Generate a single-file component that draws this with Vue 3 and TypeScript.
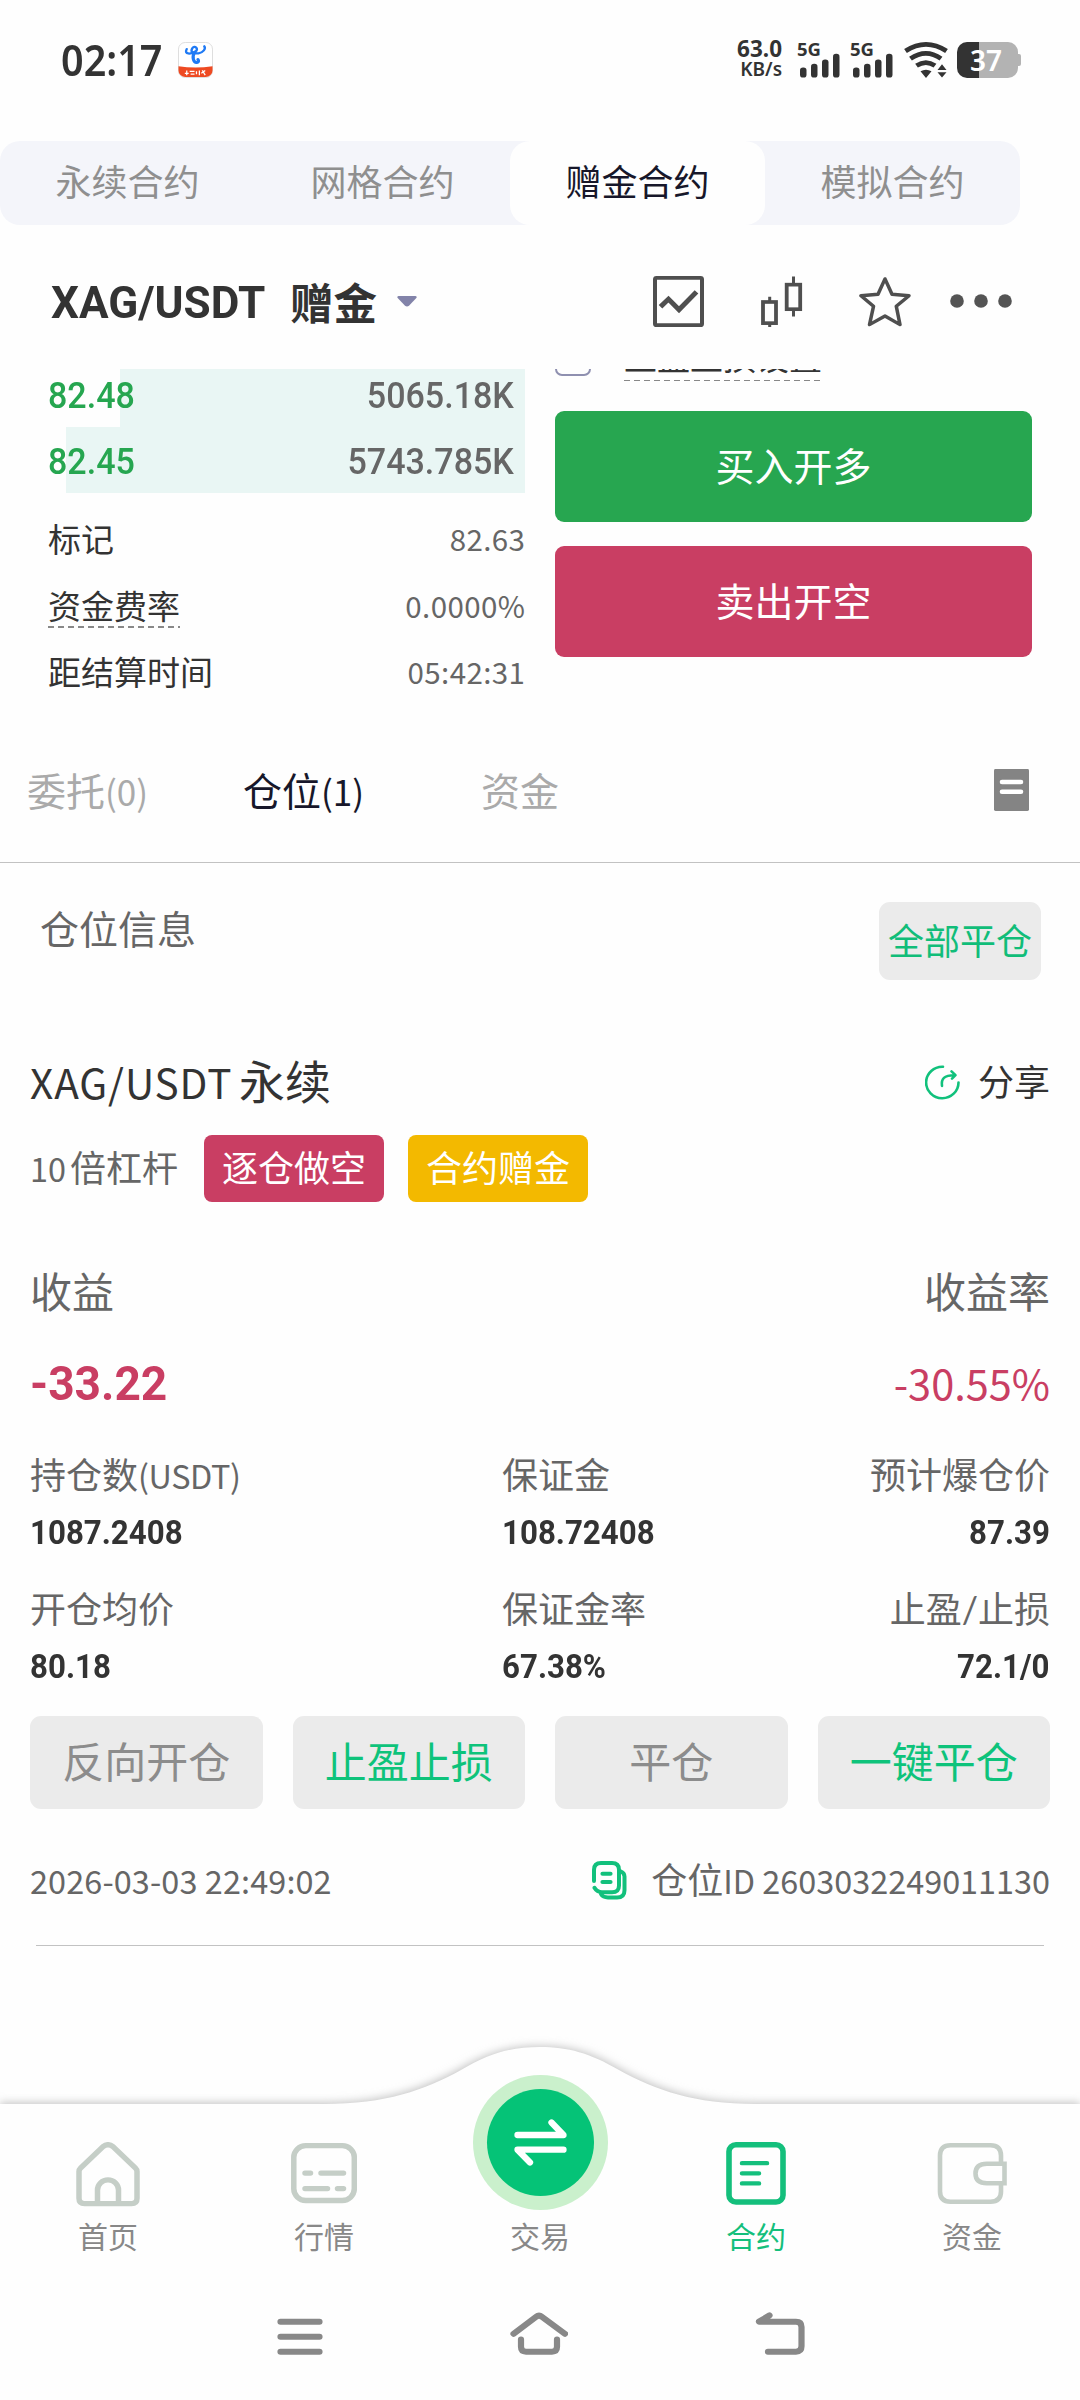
<script setup lang="ts">
import { ref } from 'vue'

interface BookRow { price: string; amount: string; depth: number }
interface Stat { label: string; latin?: string; value: string }
interface Action { text: string; primary: boolean }

const segments = ['永续合约', '网格合约', '赠金合约', '模拟合约']
const activeSegment = ref(2)

const book: BookRow[] = [
  { price: '82.48', amount: '5065.18K', depth: 84.9 },
  { price: '82.45', amount: '5743.785K', depth: 96.2 },
]

const market = [
  { label: '标记', value: '82.63', hint: false },
  { label: '资金费率', value: '0.0000%', hint: true },
  { label: '距结算时间', value: '05:42:31', hint: false },
]

const stats: Stat[] = [
  { label: '持仓数', latin: '(USDT)', value: '1087.2408' },
  { label: '保证金', value: '108.72408' },
  { label: '预计爆仓价', value: '87.39' },
  { label: '开仓均价', value: '80.18' },
  { label: '保证金率', value: '67.38%' },
  { label: '止盈/止损', value: '72.1/0' },
]

const actions: Action[] = [
  { text: '反向开仓', primary: false },
  { text: '止盈止损', primary: true },
  { text: '平仓', primary: false },
  { text: '一键平仓', primary: true },
]
</script>

<template>
  <div class="page">
    <header class="status">
      <div class="status-left">
        <span class="clock">02:17</span>
        <svg class="app-icon" width="35" height="36" viewBox="0 0 36 38" preserveAspectRatio="none">
          <rect x="0.5" y="0.5" width="35" height="37" rx="7" fill="#fff" stroke="#dcdcdc" />
          <path d="M0.5 25.500Q18 28.500 35.500 25.500V30a7 7 0 0 1-7 7H7.500a7 7 0 0 1-7-7Z" fill="#ee4a22" />
          <path d="M9 7.500C6 13.500 13 13 18 10C22 7.500 17 2.500 14.500 7C12.500 11 16 12.500 21 12C26 11 29 7 27 4.500" fill="none" stroke="#1f7af5" stroke-width="2.400" stroke-linecap="round" />
          <path d="M17 11C14 16 16 22.500 20 21.500Q22 20.500 20.500 18.500" fill="none" stroke="#1f7af5" stroke-width="3.200" stroke-linecap="round" />
          <path d="M7 33h4M9 30v5M12 31h5M13 34h4M19 31v3M22 30v5M24 33l4-3M25 30l3 5" stroke="#fff" stroke-width="1.300" />
        </svg>
      </div>
      <div class="status-right">
        <div class="rate"><span>63.0</span><span class="unit">KB/s</span></div>
        <div v-for="n in 2" :key="n" class="signal">
          <span class="net">5G</span>
          <svg width="42" height="36" viewBox="0 0 42 38" preserveAspectRatio="none" fill="#333">
            <rect x="2" y="27" width="6.500" height="10.500" rx="3" />
            <rect x="13" y="23" width="6.500" height="14.500" rx="3" />
            <rect x="24" y="18.500" width="6.500" height="19" rx="3" />
            <rect x="35" y="12.500" width="6.500" height="25" rx="3" />
          </svg>
        </div>
        <svg class="wifi" width="44" height="36" viewBox="0 0 44 38" preserveAspectRatio="none" fill="none" stroke="#333" stroke-width="4.800">
          <path d="M1.500 9.500Q22 -4.500 42.500 9.500" />
          <path d="M6.500 17.500Q22 6.500 37 17.500" />
          <path d="M12.500 25Q22 18.500 31 25" />
          <path d="M16.500 31Q22 27.500 27.500 31L22 38ZM33.500 29.500h9L38 23.500ZM33.500 32h9L38 37.500Z" fill="#333" stroke="none" />
        </svg>
        <div class="battery"><span>37</span></div>
      </div>
    </header>

    <nav class="segments">
      <div v-for="(s, i) in segments" :key="s" class="segment" :class="{ active: i === activeSegment }" @click="activeSegment = i">{{ s }}</div>
    </nav>

    <section class="pair">
      <h1><span class="din pair-code">XAG/USDT</span><span class="pair-kind">赠金</span></h1>
      <svg class="caret" width="20" height="11" viewBox="0 0 20 12" preserveAspectRatio="none"><path d="M1.500 0h17q2 0.500 0.800 2.200L12 10.500q-2 1.800-4 0L0.700 2.200Q-0.500 0.500 1.500 0Z" fill="#8283a9" /></svg>
      <div class="pair-icons">
        <svg width="51" height="51" viewBox="0 0 51 53" preserveAspectRatio="none" fill="none" stroke="#4f4f4f">
          <rect x="2" y="2" width="47" height="49" rx="1.500" stroke-width="4" />
          <path d="M7.500 32L15.500 24L26 35L43.500 16.500" stroke-width="5" />
        </svg>
        <svg class="candles" width="42" height="51" viewBox="0 0 42 53" preserveAspectRatio="none" fill="none" stroke="#4f4f4f">
          <rect x="2" y="27" width="13" height="22" stroke-width="3.800" />
          <rect x="25.700" y="9" width="13.500" height="25.500" stroke-width="3.800" />
          <path d="M8.700 21.500v5M8.700 49v4M32.500 0.500v8M32.500 34.500v7.500" stroke-width="3" />
        </svg>
        <svg class="star" width="52" height="51" viewBox="0 0 52 53" preserveAspectRatio="none" fill="none" stroke="#4f4f4f" stroke-width="3.500" stroke-linejoin="round">
          <path d="M26 3L33 19L50 20.500L37.300 31.500L41 50.500L26 41.500L10.500 50.500L14.500 31.500L2 20.500L19 19Z" />
        </svg>
        <svg class="dots" width="62" height="14" viewBox="0 0 62 14" fill="#545454">
          <circle cx="7" cy="7" r="6.800" /><circle cx="31" cy="7" r="6.800" /><circle cx="55" cy="7" r="6.800" />
        </svg>
      </div>
    </section>

    <section class="trade">
      <div class="trade-left">
        <div v-for="row in book" :key="row.price" class="book-row">
          <i class="depth" :style="{ width: row.depth + '%' }"></i>
          <span class="din price">{{ row.price }}</span>
          <span class="din amount">{{ row.amount }}</span>
        </div>
        <div class="market">
          <div v-for="m in market" :key="m.label" class="market-row">
            <span class="market-label" :class="{ hint: m.hint }">{{ m.label }}</span>
            <span class="market-value">{{ m.value }}</span>
          </div>
        </div>
      </div>
      <div class="trade-right">
        <div class="tpsl"><i class="check"></i><span>止盈止损设置</span></div>
        <button class="order buy">买入开多</button>
        <button class="order sell">卖出开空</button>
      </div>
    </section>

    <nav class="tabs">
      <span class="tab">委托<span class="lat">(0)</span></span>
      <span class="tab on">仓位<span class="lat">(1)</span></span>
      <span class="tab">资金</span>
      <svg width="35" height="42" viewBox="0 0 35 43.500" preserveAspectRatio="none"><rect width="35" height="43.500" rx="1.500" fill="#848484" /><path d="M8 13.500h19M8 23.500h19" stroke="#fff" stroke-width="4.600" stroke-linecap="round" /></svg>
    </nav>

    <section class="info-head">
      <span>仓位信息</span>
      <button class="close-all">全部平仓</button>
    </section>

    <article class="position">
      <div class="symbol-row">
        <div class="symbol"><span class="lat code">XAG/USDT</span>永续</div>
        <div class="share">
          <svg width="35" height="35" viewBox="0 0 35 36" preserveAspectRatio="none" fill="none" stroke="#11c17c" stroke-width="2.600" stroke-linecap="round" stroke-linejoin="round">
            <path d="M18 1.800A16.200 16.200 0 1 0 33.500 18" />
            <path d="M17 21.500C16 14 19 10.500 29.500 10.500M26.500 6.500L30.500 10.500L27 14" />
          </svg>
          <span>分享</span>
        </div>
      </div>
      <div class="badges">
        <span class="lever"><span class="lat">10</span>倍杠杆</span>
        <span class="badge short">逐仓做空</span>
        <span class="badge bonus">合约赠金</span>
      </div>
      <div class="profit-labels"><span>收益</span><span>收益率</span></div>
      <div class="profit-values"><span class="din profit">-33.22</span><span class="percent">-30.55%</span></div>
      <div class="stats">
        <div v-for="s in stats" :key="s.label" class="stat">
          <div class="stat-label">{{ s.label }}<span v-if="s.latin" class="lat">{{ s.latin }}</span></div>
          <div class="stat-value"><span class="din">{{ s.value }}</span></div>
        </div>
      </div>
      <div class="actions">
        <button v-for="a in actions" :key="a.text" :class="{ primary: a.primary }">{{ a.text }}</button>
      </div>
      <div class="meta">
        <span><span class="lat date">2026-03-03 22:49:02</span></span>
        <div class="pid">
          <svg width="35" height="39" viewBox="0 0 35 40" preserveAspectRatio="none" fill="none" stroke="#12c07c" stroke-width="4" stroke-linecap="round" stroke-linejoin="round">
            <path d="M2 20.500V9Q2 2 9 2H20Q27 2 27 9V25Q27 32 20 32H10Q5 32 2.500 27.500" />
            <path d="M28.500 10.500Q32.500 12 32.500 16V30Q32.500 37.500 25 37.500H16Q11 37.500 9 34" />
            <path d="M10.500 13h8M10.500 21.500h8" stroke-width="4.200" />
          </svg>
          <span>仓位<span class="lat">ID 2603032249011130</span></span>
        </div>
      </div>
      <hr />
    </article>

    <footer>
      <svg class="hill" width="1080" height="110" viewBox="0 2010 1080 110">
        <defs><filter id="soft" x="-5%" y="-30%" width="110%" height="160%"><feGaussianBlur stdDeviation="4.500" /></filter></defs>
        <path d="M0 2102.500H325C385 2102.500 425 2088 461 2068C490 2051 512 2046 540 2046C568 2046 590 2051 619 2068C655 2088 695 2102.500 755 2102.500H1080V2120H0Z" fill="#c4c4c4" filter="url(#soft)" />
        <path d="M0 2104H325C385 2104 425 2090 461 2070C490 2053 512 2047 540 2047C568 2047 590 2053 619 2070C655 2090 695 2104 755 2104H1080V2130H0Z" fill="#fefefe" />
      </svg>
      <div class="tabbar">
        <div class="item">
          <svg width="64" height="65" viewBox="0 0 64 67" preserveAspectRatio="none" fill="none" stroke="#c5cec7" stroke-width="5.500" stroke-linejoin="round">
            <path d="M3 30.500Q3 28.500 4.500 27L27 4.800Q32 0.800 37 4.800L59.500 27Q61 28.500 61 30.500V58Q61 63.500 55.500 63.500H8.500Q3 63.500 3 58Z" />
            <path d="M21.500 63V49.500a10.500 10.500 0 0 1 21 0V63" />
          </svg>
          <span>首页</span>
        </div>
        <div class="item">
          <svg width="66" height="65" viewBox="0 0 66 67" preserveAspectRatio="none" fill="none" stroke="#c5cec7" stroke-width="5.500" stroke-linecap="round">
            <rect x="2.800" y="3.800" width="60.500" height="56.500" rx="12" />
            <path d="M14 32h5.500M30 32h22.500M14 48h22.500M46.500 48h6" />
          </svg>
          <span>行情</span>
        </div>
        <div class="item">
          <div class="trade-btn">
            <svg width="107" height="107" viewBox="0 0 107 107" fill="none" stroke="#fff" stroke-width="6.300" stroke-linecap="round" stroke-linejoin="round">
              <path d="M30.500 46H76.500L64.500 33.500M76.500 60.700H30.500L43 73.500" />
            </svg>
          </div>
          <span>交易</span>
        </div>
        <div class="item current">
          <svg width="61" height="65" viewBox="0 0 61 67" preserveAspectRatio="none" fill="none" stroke="#14bf7c" stroke-width="5.600" stroke-linecap="round">
            <rect x="3" y="2.800" width="54" height="59" rx="7" />
            <path d="M16 21.800h25M16 32.300h17M16 42.700h17" stroke-width="4.500" />
          </svg>
          <span>合约</span>
        </div>
        <div class="item">
          <svg width="70" height="65" viewBox="0 0 70 67" preserveAspectRatio="none" fill="none" stroke="#c5cec7" stroke-width="4.600">
            <path d="M64 22V14Q64 3.300 53.500 3.300H13.500Q3 3.300 3 14V51Q3 61.500 13.500 61.500H53.500Q64 61.500 64 51V43" />
            <path d="M67.500 22.500H50Q38.500 22.500 38.500 32.500T50 42.500H67.500Z" />
          </svg>
          <span>资金</span>
        </div>
      </div>
      <div class="system" aria-hidden="true">
        <svg width="46" height="44.500" viewBox="277 2322 46 46" preserveAspectRatio="none"><path d="M280.500 2332h39M280.500 2347.500h39M280.500 2363h39" /></svg>
        <svg width="58" height="44.500" viewBox="511 2322 58 46" preserveAspectRatio="none"><path d="M514.500 2344.500L537 2327Q540 2324.500 543 2327L566 2344.500M522 2350.500V2358Q522 2363 527 2363H553Q558 2363 558 2358V2350.500" /></svg>
        <svg width="50" height="44.500" viewBox="755 2322 50 46" preserveAspectRatio="none"><path d="M769.500 2325.500L759 2332H796Q801.500 2332 801.500 2337.500V2357.500Q801.500 2363 796 2363H768" /></svg>
      </div>
    </footer>
  </div>
</template>

<style>
body { margin: 0; background: #fff; }
</style>

<style scoped>
* { box-sizing: border-box; }
.page {
  width: 1080px;
  height: 2400px;
  display: flex;
  flex-direction: column;
  background: #fefefe;
  color: #333;
  font-family: Lato, "Noto Sans CJK SC", sans-serif;
  font-size: 36px;
  line-height: 1.2;
  overflow: hidden;
  white-space: nowrap;
}
button { border: 0; padding: 0; margin: 0; font: inherit; color: inherit; }
svg { display: block; flex: none; }
.lat { font-family: "Noto Sans CJK SC", sans-serif; font-size: 0.9em; line-height: 1; }
.din { display: inline-block; font-family: Roboto, sans-serif; transform: scaleX(0.92); transform-origin: left center; }

.status { height: 120px; margin-bottom: 21px; padding: 0 60px 0 61px; display: flex; align-items: center; justify-content: space-between; font-family: "Noto Sans", sans-serif; }
.status-left, .status-right { display: flex; align-items: center; }
.clock { font-size: 43px; font-weight: 600; line-height: 50px; width: 117px; transform: scaleX(0.92); transform-origin: left center; }
.rate { display: flex; flex-direction: column; align-items: flex-end; font-size: 22.500px; font-weight: 700; line-height: 20px; width: 46px; margin-top: -2px; }
.rate .unit { font-size: 19px; font-weight: 600; line-height: 20px; }
.signal { position: relative; width: 42px; margin-left: 16px; }
.signal + .signal { margin-left: 11px; }
.net { position: absolute; left: -1px; top: -2px; font-size: 18.500px; font-weight: 700; line-height: 18px; }
.wifi { margin-left: 11px; }
.battery { position: relative; width: 61px; height: 36px; margin-left: 9px; margin-right: 2px; padding-right: 3px; border-radius: 10px; background: linear-gradient(90deg, #333 22px, #b3b3b3 22px); color: #fff; font-size: 28px; font-weight: 600; line-height: 36px; text-align: center; }
.battery::after { content: ""; position: absolute; right: -3px; top: 12px; width: 3px; height: 12px; border-radius: 0 2px 2px 0; background: #b3b3b3; }

.segments { width: 1020px; height: 84px; display: flex; border-radius: 20px; background: #f4f5fa; }
.segment { flex: 1; line-height: 83px; text-align: center; color: #8f8f8f; border-radius: 20px; }
.segment.active { background: #fefefe; color: #17172a; }

.pair { height: 144px; padding: 8px 68px 0 51px; display: flex; align-items: center; }
.pair h1 { margin: 3px 0 0; display: flex; align-items: center; font-size: 43.500px; line-height: 50px; }
.pair-code { width: 239px; font-size: 44.500px; font-weight: 700; transform: scaleX(0.99); }
.pair-kind { width: 88px; }
.caret { margin-left: 19px; }
.pair-icons { margin-left: auto; display: flex; align-items: center; }
.candles { margin-left: 57px; }
.star { margin-left: 56px; }
.dots { margin-left: 39px; }

.trade { height: 351px; padding: 0 48px; display: flex; gap: 30px; overflow: hidden; }
.trade-left, .trade-right { width: 477px; flex: none; }
.trade-left { margin-top: -8px; }
.book-row { position: relative; height: 66px; padding: 0 11px 0 0; display: flex; justify-content: space-between; align-items: center; font-size: 37px; font-weight: 500; color: #666; }
.book-row .din { position: relative; top: 2px; }
.depth { position: absolute; right: 0; top: 0; bottom: 0; background: #e9f6f4; }
.book-row .price { color: #26a650; }
.book-row .amount { transform-origin: right center; }
.market { margin-top: 12.500px; }
.market-row { height: 66.800px; display: flex; align-items: center; justify-content: space-between; }
.market-label { position: relative; font-size: 33px; line-height: 42px; }
.hint::after { content: ""; position: absolute; left: 0; right: 0; bottom: -1px; height: 1.500px; background: repeating-linear-gradient(90deg, #888 0 6px, transparent 6px 10px); }
.market-value { font-family: "Noto Sans CJK SC", sans-serif; font-size: 29.500px; letter-spacing: 0.400px; margin-right: -0.400px; line-height: 40px; color: #666; position: relative; top: -1px; }
.trade-right { margin-top: -30px; }
.tpsl { height: 42px; margin-bottom: 30px; display: flex; align-items: flex-start; font-size: 33px; line-height: 36px; }
.check { width: 36px; height: 36px; margin: 1px 33px 0 0; border: 2.500px solid #8f90b0; border-radius: 7px; }
.tpsl span { height: 42px; position: relative; }
.tpsl span::after { content: ""; position: absolute; left: 0; right: 0; bottom: 0; height: 1.500px; background: repeating-linear-gradient(90deg, #888 0 6px, transparent 6px 10px); }
.order { display: block; width: 477px; height: 111px; border-radius: 9px; color: #fff; font-size: 39px; line-height: 109px; }
.buy { background: #27a650; }
.sell { margin-top: 24px; background: #c93e63; }

.tabs { height: 143px; padding: 0 51px 0 27px; border-bottom: 1px solid #c2c2c2; display: flex; align-items: center; font-size: 39px; color: #aaa; }
.tab { width: 216px; }
.tab.on { width: 238px; color: #17172a; }
.tabs svg { margin-left: auto; margin-top: -2px; }

.info-head { height: 117px; padding: 39px 39px 0 40px; display: flex; justify-content: space-between; align-items: flex-start; font-size: 39px; line-height: 55px; color: #666; }
.close-all { width: 162px; height: 78px; border-radius: 11px; background: #ebebeb; color: #11bd79; font-size: 36px; line-height: 76px; }

.position { margin-top: 72.500px; padding: 0 30px; }
.symbol-row { height: 60px; display: flex; justify-content: space-between; align-items: center; }
.symbol { font-size: 46px; margin-top: -2px; }
.symbol .code { display: inline-block; width: 209px; font-size: 40.500px; letter-spacing: 0.900px; }
.share { display: flex; align-items: center; gap: 18px; }
.badges { height: 67px; margin-top: 22.500px; display: flex; align-items: center; color: #666; }
.lever { width: 174px; }
.lever .lat { margin-right: 4px; }
.badge { width: 180px; height: 67px; border-radius: 8px; line-height: 66px; text-align: center; color: #fff; }
.short { background: #c93e63; }
.bonus { margin-left: 24px; background: #f3b900; }
.profit-labels { height: 60px; margin-top: 60px; display: flex; justify-content: space-between; align-items: center; font-size: 42px; color: #666; }
.profit-values { height: 60px; margin-top: 32px; display: flex; justify-content: space-between; align-items: center; color: #c93e63; }
.profit { font-size: 48.500px; font-weight: 700; transform: scaleX(0.95); }
.percent { font-family: "Noto Sans CJK SC", sans-serif; font-size: 41.500px; line-height: 50px; margin-top: -4px; }
.stats { margin-top: 36px; display: grid; grid-template-columns: 472px 1fr 1fr; row-gap: 27.500px; }
.stat:nth-child(3n) { text-align: right; }
.stat-label { height: 50px; line-height: 50px; color: #666; }
.stat-label .lat { letter-spacing: -0.400px; }
.stat-value { height: 50px; margin-top: 6.500px; line-height: 48px; font-size: 34px; font-weight: 700; }
.stat:nth-child(3n) .din { transform-origin: right center; }
.actions { margin-top: 25.500px; display: grid; grid-template-columns: repeat(4, 1fr); gap: 30px; }
.actions button { height: 93px; border-radius: 11px; background: #ebebeb; color: #8c8c8c; font-size: 42px; line-height: 91px; }
.actions .primary { color: #0ec37b; }
.meta { height: 60px; margin-top: 42px; display: flex; justify-content: space-between; align-items: center; color: #666; }
.date { letter-spacing: 0.120px; }
.pid { display: flex; align-items: center; gap: 24px; }
.pid svg { margin-top: -2px; }
hr { height: 1px; border: 0; margin: 34px 6px 0; background: #c2c2c2; }

footer { position: relative; margin-top: auto; height: 297px; background: #fefefe; }
.hill { position: absolute; left: 0; top: -93px; }
.tabbar { position: relative; height: 184px; display: flex; }
.item { width: 216px; padding-top: 39px; display: flex; flex-direction: column; align-items: center; font-size: 30px; color: #888; }
.item > span { margin-top: 11px; line-height: 36px; }
.item.current { color: #14bf7c; }
.trade-btn { width: 135px; height: 135px; margin: -67px 0 -3px; border-radius: 50%; background: #caf0cc; display: flex; align-items: center; justify-content: center; }
.trade-btn svg { border-radius: 50%; background: #05c377; }
.system { height: 113px; padding: 25px 275px 0 277px; display: flex; justify-content: space-between; align-items: flex-start; }
.system svg { fill: none; stroke: #888; stroke-width: 6.200px; stroke-linecap: round; stroke-linejoin: round; }
</style>
